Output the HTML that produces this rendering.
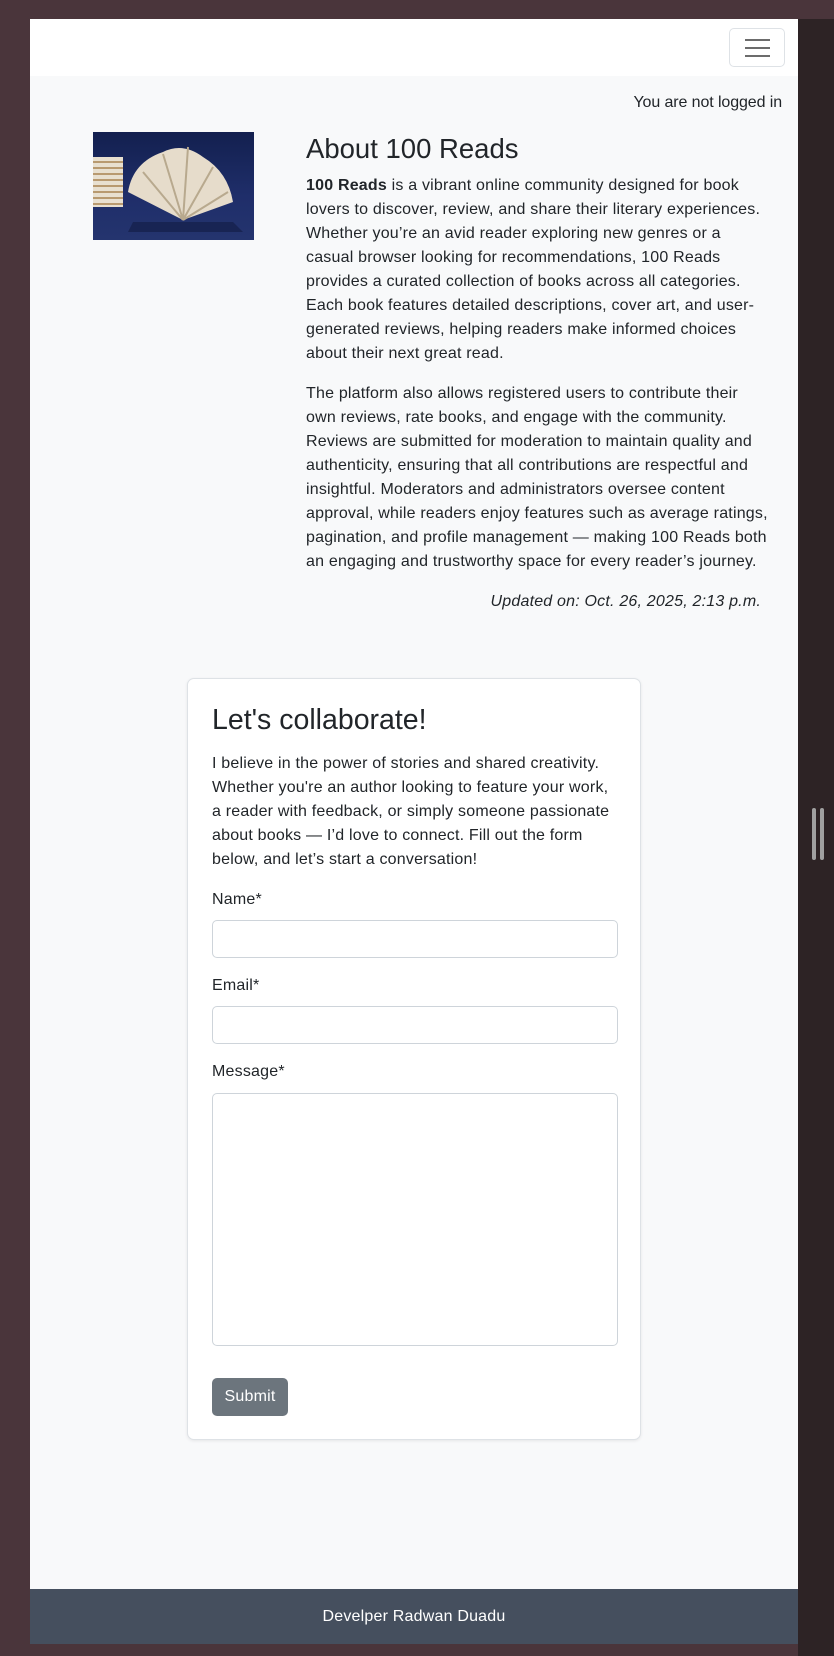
<!DOCTYPE html>
<html><head><meta charset="utf-8"><style>
*{box-sizing:border-box;margin:0;padding:0}
body{width:834px;height:1656px;background:#4a353b;font-family:"Liberation Sans",sans-serif;color:#212529;position:relative;overflow:hidden;font-size:16px;letter-spacing:0.2px}
#rs{position:absolute;left:798px;top:19px;width:36px;height:1637px;background:#2d2325}
.h1{position:absolute;left:812px;top:808px;width:4px;height:52px;background:#a0a0a0;border-radius:2px}
.h2{position:absolute;left:820px;top:808px;width:4px;height:52px;background:#a0a0a0;border-radius:2px}
#page{position:absolute;left:30px;top:19px;width:768px;height:1625px;background:#f8f9fa}
#nav{position:absolute;left:0;top:0;width:768px;height:57px;background:#fff}
#tog{position:absolute;left:699px;top:9px;width:56px;height:39px;border:1px solid #dee2e6;border-radius:5px}
#tog i{position:absolute;left:15px;width:25px;height:2px;background:#6c6c6c}
.p{position:absolute;white-space:nowrap;line-height:24px}
#img{position:absolute;left:63px;top:113px;width:161px;height:108px;background:linear-gradient(#13204f,#1f2e6a 60%,#24346e);overflow:hidden}
#card{position:absolute;left:157px;top:659px;width:454px;height:762px;background:#fff;border:1px solid #dee2e6;border-radius:7px;box-shadow:0 1px 3px rgba(0,0,0,.08)}
.in{position:absolute;left:24px;width:406px;border:1px solid #ced4da;border-radius:5px;background:#fff}
#foot{position:absolute;left:0;top:1570px;width:768px;height:55px;background:#454f5e;color:#fff;text-align:center;line-height:55px}
</style></head><body>
<div id="rs"></div><div class="h1"></div><div class="h2"></div>
<div id="page">
<div id="nav"><div id="tog"><i style="top:10px"></i><i style="top:18px"></i><i style="top:26px"></i></div></div>
<div class="p" style="right:16px;top:72px;letter-spacing:-0.1px">You are not logged in</div>
<div id="img">
<div style="position:absolute;left:0;top:25px;width:30px;height:50px;background:repeating-linear-gradient(#e8e0d0 0 4px,#b89a70 4px 6px)"></div>
<svg width="161" height="108" style="position:absolute;left:0;top:0"><path d="M90 88 L35 60 Q40 30 70 20 Q90 10 110 25 Q135 40 140 70 Z" fill="#e6dccb"/><path d="M90 88 L50 40 M90 88 L70 22 M90 88 L95 15 M90 88 L120 35 M90 88 L135 60" stroke="#b8a98e" stroke-width="2"/><path d="M40 90 L140 90 L150 100 L35 100Z" fill="#0d163a" opacity=".5"/></svg>
</div>
<div class="p" style="left:276px;top:112px;font-size:27.5px;line-height:36px;letter-spacing:0">About 100 Reads</div>
<div class="p" style="left:276px;top:155px"><b>100 Reads</b> is a vibrant online community designed for book<br>lovers to discover, review, and share their literary experiences.<br>Whether you’re an avid reader exploring new genres or a<br>casual browser looking for recommendations, 100 Reads<br>provides a curated collection of books across all categories.<br>Each book features detailed descriptions, cover art, and user-<br>generated reviews, helping readers make informed choices<br>about their next great read.</div>
<div class="p" style="left:276px;top:363px">The platform also allows registered users to contribute their<br>own reviews, rate books, and engage with the community.<br>Reviews are submitted for moderation to maintain quality and<br>authenticity, ensuring that all contributions are respectful and<br>insightful. Moderators and administrators oversee content<br>approval, while readers enjoy features such as average ratings,<br>pagination, and profile management — making 100 Reads both<br>an engaging and trustworthy space for every reader’s journey.</div>
<div class="p" style="right:37px;top:571px;font-style:italic">Updated on: Oct. 26, 2025, 2:13 p.m.</div>
<div id="card">
<div class="p" style="left:24px;top:23px;font-size:28.5px;line-height:36px;letter-spacing:0">Let's collaborate!</div>
<div class="p" style="left:24px;top:73px">I believe in the power of stories and shared creativity.<br>Whether you're an author looking to feature your work,<br>a reader with feedback, or simply someone passionate<br>about books — I’d love to connect. Fill out the form<br>below, and let’s start a conversation!</div>
<div class="p" style="left:24px;top:209px">Name*</div>
<div class="in" style="top:241px;height:38px"></div>
<div class="p" style="left:24px;top:295px">Email*</div>
<div class="in" style="top:327px;height:38px"></div>
<div class="p" style="left:24px;top:381px">Message*</div>
<div class="in" style="top:414px;height:253px"></div>
<div style="position:absolute;left:24px;top:699px;width:76px;height:38px;background:#6c757d;border-radius:5px;color:#fff;text-align:center;line-height:38px">Submit</div>
</div>
<div id="foot">Develper Radwan Duadu</div>
</div>
</body></html>
